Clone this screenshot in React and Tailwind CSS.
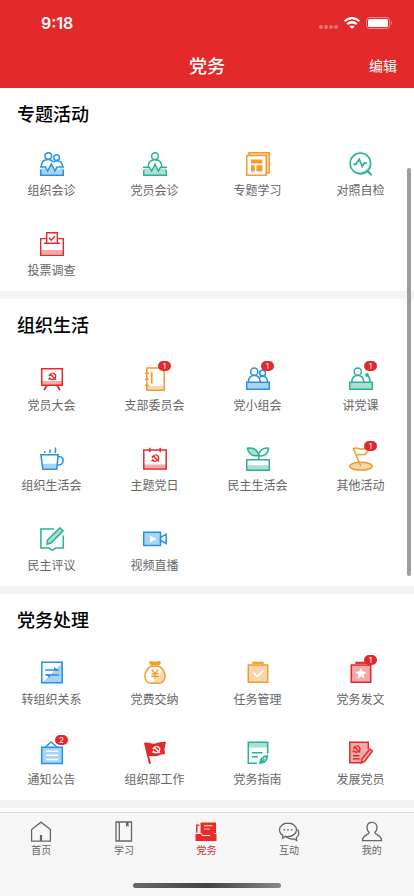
const BLUE = "#2492e6";
const BLUE_LIGHT = "#a7d3f5";
const GREEN = "#2bb196";
const GREEN_LIGHT = "#aadfd5";
const ORANGE = "#f39b2b";
const ORANGE_LIGHT = "#fad7aa";
const RED = "#e3292b";
const RED_LIGHT = "#f4a9aa";

// hammer and sickle, drawn in a 9x8 box
const Emblem = ({ x, y, color }) => (
  <g transform={`translate(${x} ${y})`} fill="none" stroke={color} strokeWidth="1.4">
    <path d="M4.3 0.6C8 1.2 8.6 4.6 6.6 6.3 5 7.6 2.8 7 1.6 5.9L0.6 7.2" />
    <path d="M2.6 2.3L8 7.4" />
    <path d="M0.9 3.6L3.6 1.2" strokeWidth="1.8" />
  </g>
);

const icons = {
  consultGroup: (
    <g fill="none" stroke={BLUE} strokeWidth="1.5">
      <path d="M.7 16.5h5.1l1.8 2.8 3.4-6.5 2.5 6 1.6-2.3h2.4l1.2 2.1 1.5-2.1h3.1v6.8H.7z" fill={BLUE_LIGHT} stroke="none" />
      <circle cx="8.3" cy="4" r="3.3" />
      <path d="M1.3 14.5C1.4 10 4 7.6 8.2 7.6c2 0 3.6.8 4.8 2.1" />
      <circle cx="16.6" cy="5.6" r="2.8" />
      <path d="M13 10.3c1-.9 2.2-1.5 3.6-1.5 3.5 0 5.8 2.3 6 5.7" />
      <path d="M0 15h5.5l2.2 4 3.7-7 3.5 7 2.1-4H24M.7 17.5v5.8h22.6v-5.8" />
    </g>
  ),
  consultMember: (
    <g fill="none" stroke={GREEN} strokeWidth="1.5">
      <path d="M.7 16.5h6l2.1 4 3.4-7 3.5 7 1.9-4h5.7v6.8H.7z" fill={GREEN_LIGHT} stroke="none" />
      <circle cx="12" cy="4.2" r="3.4" />
      <path d="M5.2 14.7C5.2 10.5 7.6 7.8 12 7.8s6.8 2.7 6.8 6.9" />
      <path d="M0 15.2h6.4l2.3 4 3.4-7 3.3 7 2.2-4H24M.7 18v5.3h22.6V18" />
    </g>
  ),
  newspaper: (
    <g fill="none" stroke={ORANGE} strokeWidth="1.5">
      <path d="M3 3.2V.8h20.3v20.3h-3" fill={ORANGE_LIGHT} />
      <path d="M.8 3.5h19.5v19.7H.8z" fill="#fff" />
      <path d="M5 7.5h11.4v4H5zM5 13.3h3.7v6.2H5zM10.4 13.3h6v6.2h-6z" fill={ORANGE} stroke="none" />
    </g>
  ),
  magnifier: (
    <g fill="none" stroke={GREEN} strokeWidth="1.5">
      <path d="M20.5 8A9 9 0 0 1 5 18.5 10.2 10.2 0 0 0 20.5 8z" fill={GREEN_LIGHT} stroke="none" />
      <circle cx="11.4" cy="11.4" r="10.3" />
      <path d="M4.3 12.3h2.5l3.400-5.100 3 7.200 2-3.200h2.600" strokeWidth="1.7" />
      <path d="M18.5 19l4.200 4.200" strokeWidth="2" />
    </g>
  ),
  vote: (
    <g fill="none" stroke={RED} strokeWidth="1.4">
      <path d="M1 18h22v4H1z" fill={RED_LIGHT} stroke="none" />
      <path d="M6.3 6.6H.7v16.6h22.6V6.6h-5.600M4 11.300h16" />
      <path d="M6.700 11.200V.7h10.600v10.500M9 5.700l2.300 2.500L15 4.300" />
    </g>
  ),
  board: (
    <g fill="none" stroke={RED} strokeWidth="1.5">
      <path d="M2 14h20v4H2z" fill={RED_LIGHT} stroke="none" />
      <path d="M1.700 1.700h20.600v16.500H1.700z" />
      <path d="M7 18.500l-3 4.500M17 18.500l3 4.500" strokeWidth="1.8" />
      <Emblem x={8} y={5.3} color={RED} />
    </g>
  ),
  notebook: (
    <g fill="none" stroke={ORANGE} strokeWidth="1.5">
      <path d="M4 19h17v4H4z" fill={ORANGE_LIGHT} stroke="none" />
      <path d="M3.800.9h17.400v22.300H3.800zM2 6.300h4M2 12.300h4M2 18.300h4" />
      <path d="M8.700 5v11.500" strokeWidth="1.8" />
    </g>
  ),
  podiumGroup: (
    <g fill="none" stroke={BLUE} strokeWidth="1.5">
      <circle cx="8.3" cy="4.7" r="3.6" />
      <path d="M2.300 15c.200-3.900 2.300-6.500 6-6.500 3.600 0 5.700 2.600 6 6.500" />
      <circle cx="16.6" cy="6.2" r="2.9" />
      <path d="M13.800 10.300c.700-.600 1.700-1 2.800-1 2.900 0 4.700 2.300 4.900 5.700" />
      <path d="M.700 15.200h22.600v7H.700z" fill={BLUE_LIGHT} />
    </g>
  ),
  podium: (
    <g fill="none" stroke={GREEN} strokeWidth="1.5">
      <circle cx="8.8" cy="4.7" r="3.6" />
      <path d="M2.800 15c.200-3.900 2.300-6.500 6-6.500 3.700 0 5.800 2.600 6 6.500" />
      <path d="M18.500 8c1.800 1.700 2.500 4 2.500 7" />
      <circle cx="18" cy="8" r="1.9" fill={GREEN} stroke="none" />
      <path d="M.700 15.200h22.600v7H.700z" fill={GREEN_LIGHT} />
    </g>
  ),
  cup: (
    <g fill="none" stroke={BLUE} strokeWidth="1.5">
      <path d="M2.300 16.800h14.500l-.600 5H3z" fill={BLUE_LIGHT} stroke="none" />
      <path d="M.900 7.700h17.300l-1.500 14.500H2.800zM18 9.700h1.800c4.800 0 4.300 8.200-1 8.200h-1.500" />
      <path d="M4.700 4v2M10 2.500V6M15.500.500v3c0 1-.200 1.800-.800 2.500" />
    </g>
  ),
  calendar: (
    <g fill="none" stroke={RED} strokeWidth="1.5">
      <path d="M1 17.500h22v4H1z" fill={RED_LIGHT} stroke="none" />
      <path d="M.800 3h22.400v19H.800zM6.800.800v4.400M17.200.800v4.400" />
      <Emblem x={8} y={7} color={RED} />
    </g>
  ),
  plant: (
    <g fill="none" stroke={GREEN} strokeWidth="1.5">
      <path d="M12.500 8.500C8 9.500 3 8 1.400 1.300 6.500.300 12 2.500 12.500 8.500z" fill={GREEN_LIGHT} />
      <path d="M13 8.800C12.500 4 17 .500 22.500 1.200 22.500 6.500 18 9.600 13 8.800zM12.700 12.500V8" />
      <path d="M1 18.300h22V23H1z" fill={GREEN_LIGHT} stroke="none" />
      <path d="M.700 12.700h22.600v10.600H.700z" />
    </g>
  ),
  golf: (
    <g fill="none" stroke={ORANGE} strokeWidth="1.5">
      <ellipse cx="12" cy="19.2" rx="11.3" ry="3.9" fill={ORANGE_LIGHT} />
      <path d="M11.800 19L4.300 1.500c3.500-1.800 6 1.300 10.700.300l2.800-.300M7.200 8.300c3-1.600 6.500.200 9.200-1.300 1.200-.700 1.800-2 2.300-3.500" />
    </g>
  ),
  review: (
    <g fill="none" stroke={GREEN} strokeWidth="1.5">
      <path d="M14 2H.900v19h8.300l3.100 2.400 3.100-2.400h7.900V8.500" />
      <path d="M7 17.300l.500-4.300L19.800.900l3.200 3L11 16z" fill={GREEN_LIGHT} />
    </g>
  ),
  video: (
    <g fill="none" stroke={BLUE} strokeWidth="1.5">
      <path d="M.700 5.200h16.800v13.300H.700z" fill={BLUE_LIGHT} />
      <path d="M17.500 10.300l5.700-3v9.200l-5.700-3z" />
      <path d="M7 8.500l6.300 3.500L7 15.500z" fill="#fff" stroke="none" />
    </g>
  ),
  transfer: (
    <g fill="none" stroke={BLUE} strokeWidth="1.5">
      <path d="M22 2v20H2z" fill={BLUE_LIGHT} stroke="none" />
      <path d="M1.800 1.200h20.400v20.600H1.800z" />
      <path d="M5 9h13.500M19 14H5.500" strokeWidth="1.7" />
      <path d="M14 6l5 3.800h-5zM10 17l-5-3.800h5z" fill={BLUE} stroke="none" />
    </g>
  ),
  moneyBag: (
    <g fill="none" stroke={ORANGE} strokeWidth="1.5">
      <path d="M20.300 9c3.500 6 1.500 13-4 13H10z" fill={ORANGE_LIGHT} stroke="none" />
      <path d="M7.500 5.300C3.500 8.500 1.300 12 2 16.500c.600 3.800 3.500 5.700 6.500 5.700h7c3 0 5.900-1.900 6.500-5.700.700-4.500-1.500-8-5.500-11.200z" />
      <path d="M7.300.800c3 .700 6.400.700 9.400 0 .800 1-.200 2.600-1.200 2.600h-7c-1 0-2-1.600-1.200-2.600z" fill={ORANGE} />
      <path d="M8.800 8.800l3.200 3.700 3.200-3.700M8.500 12.700h7M8.500 15.300h7M12 12v6.300" strokeWidth="1.4" />
    </g>
  ),
  task: (
    <g fill="none" stroke={ORANGE} strokeWidth="1.5">
      <path d="M2.300 4h19.400v17.300H2.300z" fill={ORANGE_LIGHT} />
      <path d="M6.300 1.800h11.400" strokeWidth="2.2" />
      <path d="M7.500 11.500l4 4 5.700-6" stroke="#fff" strokeWidth="1.7" />
    </g>
  ),
  dispatch: (
    <g fill="none" stroke={RED} strokeWidth="1.6">
      <path d="M2.300 4h19.400v17.300H2.300z" fill={RED_LIGHT} />
      <path d="M6.300 1.800h11.400" strokeWidth="2.2" />
      <path d="M12 7l1.700 3.500 3.800.500-2.800 2.700.700 3.800-3.400-1.900-3.400 1.900.700-3.800L6.500 11l3.800-.500z" fill="#fff" stroke="none" />
    </g>
  ),
  notice: (
    <g fill="none" stroke={BLUE} strokeWidth="1.5">
      <path d="M5.500 6L11 1l6 5" />
      <path d="M1.700 6.300h20.600v16.200H1.700z" fill={BLUE_LIGHT} />
      <path d="M6 10.200h12M6 14.300h12M6 18.500h12" stroke="#fff" />
    </g>
  ),
  flag: (
    <g>
      <path d="M1 2c5-1.500 7 1.800 11.500.500 3.500-1 6-2 10.500-1.700l-1.500 7 .500 5.500c-5-.500-6.500 2-10 2-2.500 0-3.700-.500-6-.200L8 22.500l-2 .500z" fill={RED} />
      <Emblem x={9} y={4.5} color="#fff" />
    </g>
  ),
  guide: (
    <g fill="none" stroke={GREEN} strokeWidth="1.5">
      <path d="M2.500 1.500h19v5h-19z" fill={GREEN_LIGHT} stroke="none" />
      <path d="M11 22.300H2.300V1.200h19.400v11.500M6 11.700h10.500M6 15.700h6" />
      <path d="M14.300 20.800c.500-3.800 3.200-5.500 7-6-.300 4.500-2.300 6.800-5.500 7zM13.300 23l4.700-4.700" fill={GREEN_LIGHT} strokeWidth="1.6" />
    </g>
  ),
  develop: (
    <g fill="none" stroke={RED} strokeWidth="1.5">
      <path d="M19.300 8V1.300H.800v20.500h11.500" fill={RED_LIGHT} />
      <path d="M12.300 22l7-14v5z" fill={RED_LIGHT} stroke="none" />
      <path d="M4 14.700h6.500M4 17.800h6.500" />
      <path d="M12.300 22l.700-4.200L20.800 8l2.700 2-7.800 10.300z" fill={RED_LIGHT} />
      <Emblem x={3.3} y={4} color={RED} />
    </g>
  ),
};

const sections = [
  {
    title: "专题活动",
    head: "h-[43px]",
    items: [
      { icon: "consultGroup", label: "组织会诊" },
      { icon: "consultMember", label: "党员会诊" },
      { icon: "newspaper", label: "专题学习" },
      { icon: "magnifier", label: "对照自检" },
      { icon: "vote", label: "投票调查" },
    ],
  },
  {
    title: "组织生活",
    head: "h-[47px]",
    items: [
      { icon: "board", label: "党员大会" },
      { icon: "notebook", label: "支部委员会", badge: 1 },
      { icon: "podiumGroup", label: "党小组会", badge: 1 },
      { icon: "podium", label: "讲党课", badge: 1 },
      { icon: "cup", label: "组织生活会" },
      { icon: "calendar", label: "主题党日" },
      { icon: "plant", label: "民主生活会" },
      { icon: "golf", label: "其他活动", badge: 1 },
      { icon: "review", label: "民主评议" },
      { icon: "video", label: "视频直播" },
    ],
  },
  {
    title: "党务处理",
    head: "h-[46px]",
    items: [
      { icon: "transfer", label: "转组织关系" },
      { icon: "moneyBag", label: "党费交纳" },
      { icon: "task", label: "任务管理" },
      { icon: "dispatch", label: "党务发文", badge: 1 },
      { icon: "notice", label: "通知公告", badge: 2 },
      { icon: "flag", label: "组织部工作" },
      { icon: "guide", label: "党务指南" },
      { icon: "develop", label: "发展党员" },
    ],
  },
];

const tabs = [
  {
    label: "首页",
    icon: (
      <g>
        <path d="M1.600 20.200V8.600L11 1.200l9.400 7.400v11.600z" />
        <path d="M11 20v-6" strokeWidth="2.2" />
      </g>
    ),
  },
  {
    label: "学习",
    icon: (
      <g>
        <path d="M3 1h15.500v19H3zM6.300 1v19" />
        <path d="M13 1h2.600v5l-1.300-1.200L13 6z" fill="currentColor" stroke="none" />
      </g>
    ),
  },
  {
    label: "党务",
    active: true,
    icon: (
      <g stroke="none" fill="#e92c28">
        <path d="M5.500 1.500H21v10.700h-2l-.800 1.800H7.500l-.800-1.800H5.500z" />
        <path d="M1 3.500h3.500v1.300H2.500v7H1z" />
        <path d="M.500 13h5.700l1 2h7.600l1-2h5.700v7H.500z" />
        <path d="M9 4.700h8.500M9 8h6" stroke="#ffd9a0" strokeWidth="1.2" />
      </g>
    ),
  },
  {
    label: "互动",
    icon: (
      <g>
        <path d="M10 2c-4.800 0-8.500 3-8.500 6.800 0 2.300 1.300 4.300 3.400 5.500l-.4 3 3.200-2c.7.200 1.500.3 2.300.3 4.800 0 8.500-3 8.500-6.800S14.800 2 10 2z" />
        <path d="M19.500 8.500c2.300 2.700 1.500 6.500-1.200 8.200l.4 2.800-3-1.700c-2.700.6-5.500-.2-7.200-2" />
        <path d="M5.600 8.800h1.600M9.200 8.800h1.600M12.800 8.800h1.600" strokeWidth="1.6" />
      </g>
    ),
  },
  {
    label: "我的",
    icon: <path d="M11 1.300c-3.300 0-5 2.400-5 5.200 0 2 .8 3.700 2.200 4.900 0 2.300-6.800 2.600-6.800 8.300h19.200c0-5.700-6.800-6-6.800-8.300C15.200 10.200 16 8.500 16 6.500c0-2.800-1.700-5.200-5-5.200z" />,
  },
];

const StatusBar = () => (
  <div className="flex h-11 items-center justify-between pl-[41px] pr-[22px] pt-0.5">
    <span className="font-['Inter'] text-base font-semibold">9:18</span>
    <div className="flex items-center">
      <div className="mr-1.5 mt-2 flex gap-px">
        <span className="size-1 rounded-full bg-white/35" />
        <span className="size-1 rounded-full bg-white/35" />
        <span className="size-1 rounded-full bg-white/35" />
        <span className="size-1 rounded-full bg-white/35" />
      </div>
      <svg className="mr-1.5 h-3 w-4" viewBox="0 0 16 12" fill="none" stroke="#fff" strokeWidth="2.3">
        <path d="M.700 4.200c4.100-4.100 10.500-4.100 14.600 0M3.300 7.200c2.600-2.600 6.800-2.600 9.400 0" />
        <path d="M8 12L5.500 9.400c1.400-1.300 3.600-1.300 5 0z" fill="#fff" stroke="none" />
      </svg>
      <svg className="h-3 w-[26px]" viewBox="0 0 26 12">
        <rect x=".5" y=".5" width="23" height="11" rx="3" fill="none" stroke="#fff" strokeOpacity=".45" />
        <rect x="2" y="2" width="20" height="8" rx="1.5" fill="#fff" />
        <path d="M25 4v4c1.200-.700 1.200-3.300 0-4z" fill="#fff" fillOpacity=".5" />
      </svg>
    </div>
  </div>
);

const Item = ({ icon, label, badge }) => (
  <div className="flex h-20 flex-col items-center pt-[21px]">
    <div className="relative size-6">
      <svg className="size-6" viewBox="0 0 24 24">{icons[icon]}</svg>
      {badge && (
        <span className="absolute -top-1.5 left-[15.5px] flex h-2.5 w-[13px] items-center justify-center rounded-full bg-[#e3292b] font-['Inter'] text-[8px] leading-none text-white">
          {badge}
        </span>
      )}
    </div>
    <span className="mt-1.5 whitespace-nowrap text-xs leading-4 text-[#666]">{label}</span>
  </div>
);

export default function App() {
  return (
    <div className="relative flex h-[896px] w-[414px] flex-col overflow-hidden bg-white font-['Noto_Sans_CJK_SC',sans-serif]">
      <header className="h-[88px] shrink-0 bg-[#e3292a] text-white">
        <StatusBar />
        <div className="grid h-[42px] grid-cols-3 items-center px-[17px]">
          <span />
          <h1 className="text-center text-lg font-medium">党务</h1>
          <button className="text-right text-sm">编辑</button>
        </div>
      </header>

      <main className="min-h-0 flex-1 overflow-hidden">
        {sections.map(({ title, head, items }) => (
          <section key={title} className="border-b-8 border-[#f4f4f4]">
            <div className={head}>
              <h2 className="pl-[17px] pt-3 text-lg font-medium leading-[26px] text-black">{title}</h2>
            </div>
            <div className="grid w-[412px] grid-cols-4">
              {items.map((item) => (
                <Item key={item.label} {...item} />
              ))}
            </div>
          </section>
        ))}
      </main>

      <div className="absolute left-[407px] top-[168px] h-[408px] w-1 rounded-full bg-[#9d9d9d]" />

      <nav className="flex h-[84px] shrink-0 flex-col border-t border-[#dedede] bg-[#f7f7f7]">
        <div className="grid w-[413px] grid-cols-5 pt-2">
          {tabs.map(({ label, icon, active }) => (
            <div key={label} className={`flex flex-col items-center ${active ? "text-[#e3292a]" : "text-[#666]"}`}>
              <svg className="size-[22px]" viewBox="0 0 22 22" fill="none" stroke="currentColor" strokeWidth="1.3">
                {icon}
              </svg>
              <span className="text-[10px] leading-[14px]">{label}</span>
            </div>
          ))}
        </div>
        <div className="mx-auto mb-2 mt-auto h-[5px] w-[148px] rounded-full bg-linear-to-r from-[#686868] via-[#444] to-[#888]" />
      </nav>
    </div>
  );
}
